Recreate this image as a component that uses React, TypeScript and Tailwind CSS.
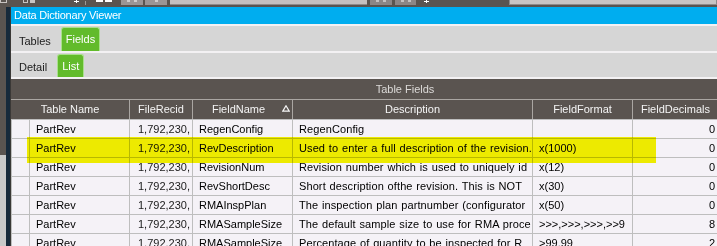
import React from 'react'

/**
 * Data Dictionary Viewer — Fields / List grid, with the yellow marker stroke
 * across the RevDescription row.
 */

const rows = [
  { table: 'PartRev', recid: '1,792,230,', field: 'RegenConfig', desc: 'RegenConfig', format: '', dec: '0' },
  { table: 'PartRev', recid: '1,792,230,', field: 'RevDescription', desc: 'Used to enter a full description of the revision.', format: 'x(1000)', dec: '0' },
  { table: 'PartRev', recid: '1,792,230,', field: 'RevisionNum', desc: 'Revision number which is used to uniquely id', format: 'x(12)', dec: '0' },
  { table: 'PartRev', recid: '1,792,230,', field: 'RevShortDesc', desc: 'Short description ofthe revision. This is NOT', format: 'x(30)', dec: '0' },
  { table: 'PartRev', recid: '1,792,230,', field: 'RMAInspPlan', desc: 'The inspection plan partnumber (configurator', format: 'x(50)', dec: '0' },
  { table: 'PartRev', recid: '1,792,230,', field: 'RMASampleSize', desc: 'The default sample size to use for RMA proce', format: '>>>,>>>,>>>,>>9', dec: '8' },
  { table: 'PartRev', recid: '1,792,230,', field: 'RMASampleSize', desc: 'Percentage of quantity to be inspected for R', format: '>99.99', dec: '2' },
]

function Plus() {
  return (
    <div className="relative h-[3px] w-[5px] shrink-0">
      <div className="absolute left-[2px] top-0 h-[3px] w-[1px] bg-white" />
      <div className="absolute left-0 top-[1px] h-[1px] w-[5px] bg-white" />
    </div>
  )
}

function Toolbar() {
  return (
    <div className="flex h-[7px] shrink-0 items-start overflow-hidden bg-[#5a5450]">
      <div className="h-[3px] w-[7px] border-x border-b border-[#c8c4c2]" />
      <div className="ml-[16px] flex gap-[2px]">
        <div className="h-[3px] w-[5px] border-x border-b border-[#c8c4c2]" />
        <div className="h-[3px] w-[5px] bg-[#c8c4c2]" />
      </div>
      <div className="ml-[39px]">
        <Plus />
      </div>
      <div className="ml-[6px] mt-[1px] h-[4px] w-[1px] bg-[#9c9896]" />
      <div className="ml-[10px] flex gap-[2px]">
        <div className="h-[2px] w-[7px] bg-white" />
        <div className="h-[2px] w-[7px] bg-white" />
      </div>
      <div className="ml-[9px] flex h-[5px] w-[22px] items-start justify-center gap-[4px] bg-[#9b9595]">
        <div className="h-[2px] w-[3px] bg-[#d0cccc]" />
        <div className="h-[2px] w-[3px] bg-[#d0cccc]" />
      </div>
      <div className="ml-[2px] flex h-[5px] w-[22px] items-start justify-center bg-[#9b9595]">
        <div className="h-[2px] w-[3px] bg-[#d0cccc]" />
      </div>
      <div className="ml-[3px] h-[5px] w-[197px] border-b border-[#8e8a8a] bg-[#c4c0c0]" />
      <div className="ml-[3px] flex h-[5px] w-[22px] items-start justify-center gap-[4px] bg-[#8c8686]">
        <div className="h-[2px] w-[3px] bg-[#c4c0c0]" />
        <div className="h-[2px] w-[3px] bg-[#c4c0c0]" />
      </div>
      <div className="ml-[3px] flex h-[5px] w-[21px] items-start justify-center gap-[4px] bg-[#8c8686]">
        <div className="h-[2px] w-[3px] bg-[#c4c0c0]" />
        <div className="h-[2px] w-[3px] bg-[#c4c0c0]" />
      </div>
      <div className="ml-[8px]">
        <Plus />
      </div>
      <div className="ml-[80px] h-[5px] flex-1 border border-t-0 border-[#8e8a8a] bg-[#c8c4c4]" />
    </div>
  )
}

function SortIcon() {
  return (
    <svg width="8" height="7" viewBox="0 0 8 7" className="mb-[2px] mr-[2px] shrink-0">
      <path d="M4 0.8 L7.2 6.2 L0.8 6.2 Z" fill="none" stroke="#f4f4f4" strokeWidth="1.2" />
    </svg>
  )
}

export default function App() {
  return (
    <div className="flex h-[246px] w-[717px] flex-col overflow-hidden bg-[#5a5450] font-['Liberation_Sans',Arial,sans-serif] text-[11px] leading-none">
      <Toolbar />
      <div className="flex h-[239px] shrink-0">
        {/* left frame edge */}
        <div className="flex w-[6px] shrink-0 flex-col">
          <div className="h-[148px] shrink-0 bg-[#5a5450]" />
          <div className="flex-1 bg-[#c9c9c9]" />
        </div>
        <div className="w-[4px] shrink-0 bg-[#172a3b]" />
        <div className="w-[1px] shrink-0 bg-[#3a3836]" />

        <div className="flex min-w-0 flex-1 flex-col overflow-hidden">
          {/* Title */}
          <div className="flex h-[17px] shrink-0 items-center bg-[#00adef] pl-[3px] text-[11px] tracking-[-0.2px] text-white">
            Data Dictionary Viewer
          </div>
          <div className="h-[2px] shrink-0 bg-[#f3f1f3]" />

          {/* Tabs */}
          <div className="flex h-[25px] shrink-0 items-end gap-[5px] bg-[#d6d6d6] pl-[3px]">
            <div className="flex h-[24px] items-center px-[5px] pt-[4px] text-[#1c1c1c]">Tables</div>
            <div className="flex h-[24px] items-center rounded-t-[3px] border border-b-0 border-[#a9e08c] bg-[#62bb2b] px-[4px] text-white">
              Fields
            </div>
          </div>
          <div className="h-[2px] shrink-0 bg-[#f3f1f3]" />
          <div className="flex h-[24px] shrink-0 items-end gap-[5px] bg-[#d6d6d6] pl-[3px]">
            <div className="flex h-[23px] items-center px-[5px] pt-[4px] text-[#1c1c1c]">Detail</div>
            <div className="flex h-[23px] items-center rounded-t-[3px] border border-b-0 border-[#a9e08c] bg-[#62bb2b] px-[4px] text-white">
              List
            </div>
          </div>
          <div className="h-[2px] shrink-0 bg-[#f3f1f3]" />

          {/* Grid */}
          <div className="relative w-[788px] shrink-0">
            <div className="flex h-[20px] items-center justify-center text-[#dcdad8]">Table Fields</div>
            <div className="flex h-[20px] border-t border-[#aaa6a2] text-[#f4f4f4]">
              <div className="flex w-[119px] items-center justify-center border-r border-[#aaa6a2]">Table Name</div>
              <div className="flex w-[63px] items-center justify-center border-r border-[#aaa6a2]">FileRecid</div>
              <div className="flex w-[100px] items-center border-r border-[#aaa6a2]">
                <span className="flex-1 pl-[2px] text-center">FieldName</span>
                <SortIcon />
              </div>
              <div className="flex w-[240px] items-center justify-center border-r border-[#aaa6a2]">Description</div>
              <div className="flex w-[100px] items-center justify-center border-r border-[#aaa6a2]">FieldFormat</div>
              <div className="flex w-[86px] items-center justify-center border-r border-[#aaa6a2]">FieldDecimals</div>
              <div className="flex-1" />
            </div>

            {rows.map((r, i) => (
              <div key={i} className="flex h-[19px] border-l border-t border-[#bebebe] bg-[#f5f2f7] text-black">
                <div className="w-[18px] border-r border-[#bebebe]" />
                <div className="flex w-[100px] items-center overflow-hidden whitespace-nowrap border-r border-[#bebebe] pl-[6px]">
                  {r.table}
                </div>
                <div className="flex w-[63px] items-center justify-end overflow-hidden whitespace-nowrap border-r border-[#bebebe] pr-[2px] text-[#1a1a1a]">
                  {r.recid}
                </div>
                <div className="flex w-[100px] items-center overflow-hidden whitespace-nowrap border-r border-[#bebebe] pl-[6px]">
                  {r.field}
                </div>
                <div className="flex w-[240px] items-center overflow-hidden whitespace-nowrap border-r border-[#bebebe] pl-[6px] tracking-[0.1px] [word-spacing:0.6px]">
                  {r.desc}
                </div>
                <div className="flex w-[100px] items-center overflow-hidden whitespace-nowrap border-r border-[#bebebe] pl-[6px]">
                  {r.format}
                </div>
                <div className="flex w-[86px] items-center justify-end border-r border-[#bebebe] pr-[3px]">{r.dec}</div>
                <div className="flex-1" />
              </div>
            ))}

            {/* marker stroke over the RevDescription row */}
            <div className="pointer-events-none absolute left-[16px] top-[58px] h-[26px] w-[629px] bg-[#f7f700] mix-blend-multiply" />
          </div>
        </div>
      </div>
    </div>
  )
}
